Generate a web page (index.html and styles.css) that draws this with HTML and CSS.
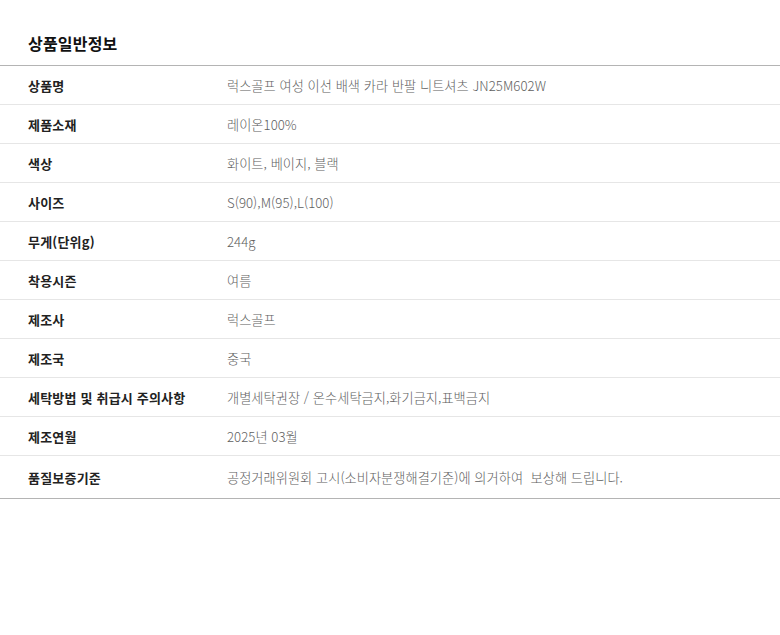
FILE: index.html
```html
<!DOCTYPE html>
<html lang="ko">
<head>
<meta charset="utf-8">
<link rel="stylesheet" href="styles.css">
</head>
<body>
<div class="page">
  <h2 class="title">상품일반정보</h2>
  <div class="table">
    <div class="row"><div class="label">상품명</div><div class="value">럭스골프 여성 이선 배색 카라 반팔 니트셔츠 JN25M602W</div></div>
    <div class="row"><div class="label">제품소재</div><div class="value">레이온100%</div></div>
    <div class="row"><div class="label">색상</div><div class="value">화이트, 베이지, 블랙</div></div>
    <div class="row"><div class="label">사이즈</div><div class="value">S(90),M(95),L(100)</div></div>
    <div class="row"><div class="label">무게(단위g)</div><div class="value">244g</div></div>
    <div class="row"><div class="label">착용시즌</div><div class="value">여름</div></div>
    <div class="row"><div class="label">제조사</div><div class="value">럭스골프</div></div>
    <div class="row"><div class="label">제조국</div><div class="value">중국</div></div>
    <div class="row"><div class="label">세탁방법 및 취급시 주의사항</div><div class="value">개별세탁권장 / 온수세탁금지,화기금지,표백금지</div></div>
    <div class="row"><div class="label">제조연월</div><div class="value">2025년 03월</div></div>
    <div class="row row-last"><div class="label">품질보증기준</div><div class="value">공정거래위원회 고시(소비자분쟁해결기준)에 의거하여&nbsp; 보상해 드립니다.</div></div>
  </div>
</div>
</body>
</html>
```
FILE: styles.css
```css
html, body {
  margin: 0;
  padding: 0;
  background: #fff;
}
body {
  font-family: "Noto Sans CJK KR", "Noto Sans", sans-serif;
  color: #222;
}
.page {
  padding-top: 30px;
}
.title {
  margin: 0;
  padding: 0 28px;
  font-size: 16px;
  font-weight: 700;
  line-height: 26px;
  height: 35px;
  color: #111;
  letter-spacing: 0.2px;
}
.table {
  border-top: 1px solid #b4b4b4;
  border-bottom: 1px solid #b4b4b4;
}
.row {
  display: grid;
  grid-template-columns: 199px 1fr;
  padding: 0 28px;
  height: 38px;
  align-items: center;
  border-top: 1px solid #e6e6e6;
  font-size: 13px;
  letter-spacing: 0.1px;
}
.row:first-child {
  border-top: none;
}
.row-last {
  height: 42px;
}
.label {
  font-weight: 700;
  color: #222;
  letter-spacing: 0.2px;
}
.value {
  font-weight: 300;
  font-size: 13.2px;
  letter-spacing: 0.05px;
  color: #5e5e5e;
}
```
